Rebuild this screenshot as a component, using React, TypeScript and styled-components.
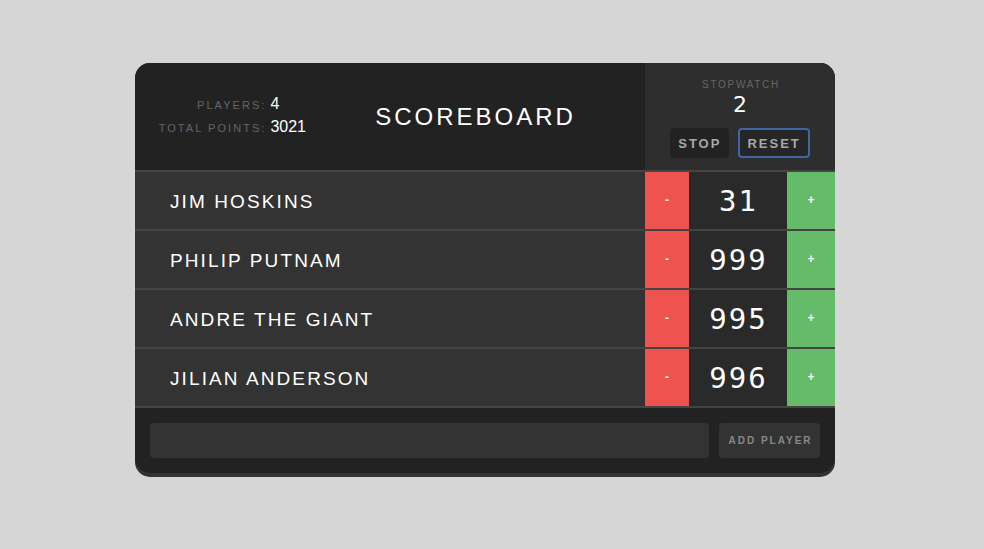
import React from "react";
import styled, { createGlobalStyle } from "styled-components";

const Global = createGlobalStyle`
  html, body { margin: 0; padding: 0; background: #d6d6d6; }
  body { font-family: "Liberation Sans", Arial, sans-serif; }
  * { box-sizing: border-box; }
`;

const Page = styled.div`
  display: flex;
  justify-content: flex-start;
  padding-top: 63px;
  padding-left: 135px;
  padding-bottom: 20px;
`;

const Board = styled.div`
  width: 700px;
  display: flex;
  flex-direction: column;
  background: #333;
  border-radius: 15px;
  box-shadow: 0 4px 0 #333;
  overflow: hidden;
  color: #fafafa;
  text-transform: uppercase;
`;

const Header = styled.div`
  display: flex;
  height: 109px;
  background: #222;
  border-bottom: 2px solid #444;
`;

const HeaderMain = styled.div`
  flex: 1;
  display: flex;
  align-items: center;
`;

const Stats = styled.div`
  width: 171px;
  display: grid;
  grid-template-columns: auto auto;
  justify-content: end;
  column-gap: 4px;
  row-gap: 5px;
  align-items: baseline;
  margin-bottom: 2px;
`;

const StatLabel = styled.span`
  font-size: 11px;
  letter-spacing: 2.05px;
  color: #666;
  text-align: right;
`;

const StatValue = styled.span`
  font-size: 16px;
  color: #fff;
`;

const Title = styled.h1`
  flex: 1;
  margin: 0;
  text-align: center;
  font-weight: normal;
  font-size: 24px;
  letter-spacing: 3px;
  color: #fff;
`;

const Stopwatch = styled.div`
  width: 190px;
  background: #2e2e2e;
  display: flex;
  flex-direction: column;
  align-items: center;
  padding-top: 16px;
`;

const SwLabel = styled.div`
  font-size: 10px;
  letter-spacing: 1.7px;
  color: #666;
  padding-left: 2px;
`;

const SwTime = styled.div`
  font-family: "DejaVu Sans", sans-serif;
  font-size: 22px;
  margin-top: 2px;
  line-height: 26px;
  color: #fff;
`;

const SwButtons = styled.div`
  display: flex;
  gap: 9px;
  margin-top: 10px;
`;

const SwButton = styled.button<{ $outlined?: boolean }>`
  height: 30px;
  padding: 0 ${(p) => (p.$outlined ? "7px" : "6px")};
  border-radius: 4px;
  border: ${(p) => (p.$outlined ? "2px solid #3f67a6" : "2px solid #222")};
  background: ${(p) => (p.$outlined ? "#262626" : "#222")};
  color: #a8a8a8;
  font-family: "Liberation Sans", Arial, sans-serif;
  font-weight: bold;
  font-size: 13px;
  letter-spacing: 2px;
  text-transform: uppercase;
`;

const Row = styled.div`
  display: flex;
  height: 59px;
  border-bottom: 2px solid #444;
  background: #333;
`;

const Name = styled.div`
  flex: 1;
  display: flex;
  align-items: center;
  padding-left: 35px;
  padding-top: 2px;
  font-size: 19px;
  letter-spacing: 2.1px;
  color: #fff;
`;

const Counter = styled.div`
  width: 190px;
  display: flex;
`;

const Action = styled.button<{ $kind: "inc" | "dec" }>`
  width: ${(p) => (p.$kind === "dec" ? "44px" : "48px")};
  border: none;
  padding: 0;
  background: ${(p) => (p.$kind === "dec" ? "#ef5350" : "#66bb6a")};
  color: #fafafa;
  font-family: "Liberation Sans", Arial, sans-serif;
  font-weight: bold;
  font-size: 12px;
  display: flex;
  align-items: center;
  justify-content: center;
  padding-bottom: 1px;
`;

const Score = styled.div`
  flex: 1;
  background: #2a2a2a;
  display: flex;
  align-items: center;
  justify-content: center;
  font-family: "DejaVu Sans Mono", monospace;
  font-size: 29px;
  letter-spacing: 2px;
  padding-left: 1px;
  color: #fff;
`;

const Footer = styled.form`
  display: flex;
  gap: 10px;
  background: #222;
  padding: 15px;
  height: 65px;
  margin: 0;
`;

const Input = styled.input`
  flex: 1;
  height: 35px;
  border: none;
  border-radius: 4px;
  background: #333;
  outline: none;
`;

const AddButton = styled.button`
  width: 101px;
  height: 35px;
  border: none;
  border-radius: 4px;
  background: #333;
  color: #888;
  font-family: "Liberation Sans", Arial, sans-serif;
  font-weight: bold;
  font-size: 10px;
  letter-spacing: 2px;
  text-transform: uppercase;
  padding: 0 0 0 2px;
`;

const players = [
  { name: "Jim Hoskins", score: 31 },
  { name: "Philip Putnam", score: 999 },
  { name: "Andre the Giant", score: 995 },
  { name: "Jilian Anderson", score: 996 },
];

export default function App() {
  const total = players.reduce((s, p) => s + p.score, 0);
  return (
    <>
      <Global />
      <Page>
        <Board>
          <Header>
            <HeaderMain>
              <Stats>
                <StatLabel>Players:</StatLabel>
                <StatValue>{players.length}</StatValue>
                <StatLabel>Total Points:</StatLabel>
                <StatValue>{total}</StatValue>
              </Stats>
              <Title>Scoreboard</Title>
            </HeaderMain>
            <Stopwatch>
              <SwLabel>Stopwatch</SwLabel>
              <SwTime>2</SwTime>
              <SwButtons>
                <SwButton>Stop</SwButton>
                <SwButton $outlined>Reset</SwButton>
              </SwButtons>
            </Stopwatch>
          </Header>
          {players.map((p) => (
            <Row key={p.name}>
              <Name>{p.name}</Name>
              <Counter>
                <Action $kind="dec">-</Action>
                <Score>{p.score}</Score>
                <Action $kind="inc">+</Action>
              </Counter>
            </Row>
          ))}
          <Footer onSubmit={(e) => e.preventDefault()}>
            <Input type="text" />
            <AddButton type="submit">Add Player</AddButton>
          </Footer>
        </Board>
      </Page>
    </>
  );
}
